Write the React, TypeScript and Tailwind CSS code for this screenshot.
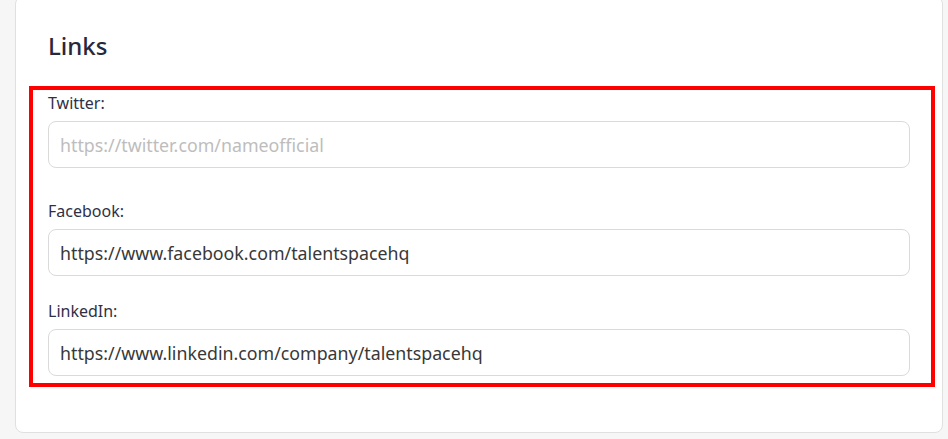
import React from 'react';

const fields = [
  { label: 'Twitter:', value: '', placeholder: 'https://twitter.com/nameofficial', gap: 'mb-[32px]' },
  { label: 'Facebook:', value: 'https://www.facebook.com/talentspacehq', placeholder: '', gap: 'mb-[24px]' },
  { label: 'LinkedIn:', value: 'https://www.linkedin.com/company/talentspacehq', placeholder: '', gap: '' },
];

export default function App() {
  return (
    <div className="min-h-[439px] bg-[#f6f6f6] pl-[15px] pr-[5px] overflow-hidden" style={{ fontFamily: '"Noto Sans", "Open Sans", sans-serif' }}>
      <div className="-mt-[4px] h-[437px] rounded-lg border border-[#e0e0e0] bg-white pt-[33px]">
        <h2 className="pl-[32px] text-[24px] leading-[32px] font-medium text-[#27283d]">Links</h2>
        <div className="mt-[24px] ml-[13px] mr-[7px] border-4 border-[#ff0000] pt-[2px] pb-[7px] pl-[15px] pr-[21px]">
          {fields.map((f) => (
            <div key={f.label} className={f.gap}>
              <label className="block text-[16px] leading-[22px] text-[#2f3046]">{f.label}</label>
              <input
                readOnly
                defaultValue={f.value}
                placeholder={f.placeholder}
                className="mt-[7px] block h-[47px] w-full rounded-lg border border-[#dadada] bg-white pl-[11px] text-[17.8px] text-[#383838] outline-none placeholder:text-[#bdbdbd]"
              />
            </div>
          ))}
        </div>
      </div>
    </div>
  );
}
